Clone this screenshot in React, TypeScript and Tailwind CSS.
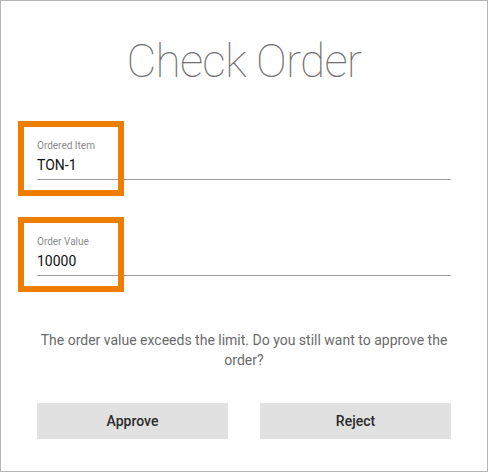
import React from "react";

function Field({ label, value }: { label: string; value: string }) {
  return (
    <div className="relative">
      <div className="text-[10px] leading-[12px] text-[#8a8a8a]">{label}</div>
      <div className="mt-[3px] text-[14px] leading-[20px] text-[#111] pb-[4px] border-b border-[#9a9a9a]">
        {value}
      </div>
      <div className="absolute left-[-19px] top-[-19px] w-[106px] h-[75px] border-[6px] border-[#ef7d00] pointer-events-none" />
    </div>
  );
}

export default function App() {
  return (
    <div
      className="w-[488px] h-[472px] border border-[#b5b5b5] bg-white px-[36px] flex flex-col"
      style={{ fontFamily: "Roboto, 'Liberation Sans', sans-serif" }}
    >
      <h1 className="mt-[32px] h-[56px] text-center text-[46px] leading-[56px] tracking-[-0.8px] font-thin text-[#707070]">
        Check Order
      </h1>
      <div className="mt-[51px]">
        <Field label="Ordered Item" value="TON-1" />
      </div>
      <div className="mt-[56px]">
        <Field label="Order Value" value="10000" />
      </div>
      <p className="mt-[54px] text-center text-[14px] leading-[20px] text-[#6a6a6a]">
        The order value exceeds the limit. Do you still want to approve the order?
      </p>
      <div className="mt-[33px] flex gap-[32px]">
        <button className="flex-1 h-[36px] bg-[#e1e1e1] text-[14px] font-medium text-[#2b2b2b]">
          Approve
        </button>
        <button className="flex-1 h-[36px] bg-[#e1e1e1] text-[14px] font-medium text-[#2b2b2b]">
          Reject
        </button>
      </div>
    </div>
  );
}
